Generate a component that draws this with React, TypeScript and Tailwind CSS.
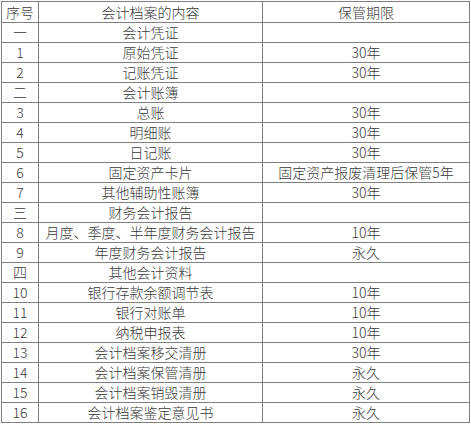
const rows: [string, string, string][] = [
  ['一', '会计凭证', ''],
  ['1', '原始凭证', '30年'],
  ['2', '记账凭证', '30年'],
  ['二', '会计账簿', ''],
  ['3', '总账', '30年'],
  ['4', '明细账', '30年'],
  ['5', '日记账', '30年'],
  ['6', '固定资产卡片', '固定资产报废清理后保管5年'],
  ['7', '其他辅助性账簿', '30年'],
  ['三', '财务会计报告', ''],
  ['8', '月度、季度、半年度财务会计报告', '10年'],
  ['9', '年度财务会计报告', '永久'],
  ['四', '其他会计资料', ''],
  ['10', '银行存款余额调节表', '10年'],
  ['11', '银行对账单', '10年'],
  ['12', '纳税申报表', '10年'],
  ['13', '会计档案移交清册', '30年'],
  ['14', '会计档案保管清册', '永久'],
  ['15', '会计档案销毁清册', '永久'],
  ['16', '会计档案鉴定意见书', '永久'],
]

const cell = 'border border-[#7f7f7f] p-0 text-center align-middle whitespace-nowrap'

export default function App() {
  return (
    <div
      className="bg-white w-[471px] h-[426px] pt-px pl-px text-[#3a3a3a] text-[14px] leading-[19px] font-light"
      style={{ fontFamily: '"Microsoft YaHei", "Noto Sans CJK SC", sans-serif' }}
    >
      <table className="border-collapse border border-[#3a3a3a] w-[468px] table-fixed">
        <colgroup>
          <col className="w-[37px]" />
          <col className="w-[224px]" />
          <col className="w-[207px]" />
        </colgroup>
        <tbody>
          <tr className="h-[21px]">
            <td className={cell}>序号</td>
            <td className={cell}>会计档案的内容</td>
            <td className={cell}>保管期限</td>
          </tr>
          {rows.map(([no, name, term]) => (
            <tr key={no} className="h-[20px]">
              <td className={cell}>{no}</td>
              <td className={cell}>{name}</td>
              <td className={cell}>{term}</td>
            </tr>
          ))}
        </tbody>
      </table>
    </div>
  )
}
